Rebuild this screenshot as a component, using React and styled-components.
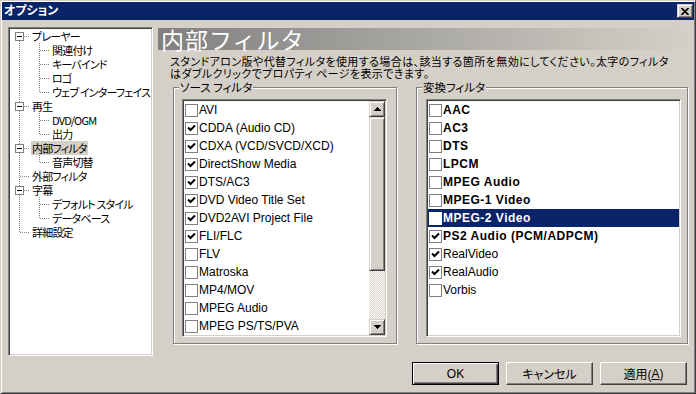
import React from "react";
import styled, { createGlobalStyle } from "styled-components";

const GlobalStyle = createGlobalStyle`
  html, body {
    margin: 0;
    padding: 0;
    background: #d4d0c8;
  }
  body {
    font-family: "Liberation Sans", "Noto Sans CJK JP", sans-serif;
    font-size: 12px;
    font-feature-settings: "palt";
    color: #000;
  }
  * {
    box-sizing: border-box;
  }
`;

const raised = `
  background: #d4d0c8;
  border: 1px solid;
  border-color: #d4d0c8 #404040 #404040 #d4d0c8;
  box-shadow: inset 1px 1px #fff, inset -1px -1px #808080;
`;

const sunken = `
  background: #fff;
  border: 1px solid;
  border-color: #808080 #fff #fff #808080;
  box-shadow: inset 1px 1px #404040, inset -1px -1px #d4d0c8;
`;

const Window = styled.div`
  width: 696px;
  height: 394px;
  background: #d4d0c8;
  border: 1px solid;
  border-color: #d4d0c8 #404040 #404040 #d4d0c8;
  box-shadow: inset 1px 1px #fff, inset -1px -1px #808080;
  padding: 1px;
  display: flex;
  flex-direction: column;
`;

const TitleBar = styled.div`
  height: 18px;
  background: #0a246a;
  display: flex;
  align-items: center;
  justify-content: space-between;
  padding: 0 1px 0 2px;
`;

const Title = styled.span`
  color: #fff;
  font-weight: bold;
  font-size: 12px;
  line-height: 18px;
`;

const CloseBtn = styled.div`
  ${raised}
  width: 16px;
  height: 14px;
  display: flex;
  align-items: center;
  justify-content: center;
`;

const Body = styled.div`
  flex: 1;
  display: flex;
  flex-direction: column;
  padding: 7px 6px 6px 6px;
`;

const Main = styled.div`
  display: flex;
  align-items: flex-start;
  gap: 5px;
`;

const Tree = styled.div`
  ${sunken}
  width: 145px;
  height: 329px;
  padding: 1px 0 0 1px;
  overflow: hidden;
`;

const TreeRow = styled.div`
  display: flex;
  align-items: center;
  height: 14px;
`;

const TreeLabel = styled.span`
  font-family: "Noto Sans CJK JP", sans-serif;
  font-size: 11px;
  letter-spacing: -0.8px;
  line-height: 14px;
  padding: 0 1px;
  margin-left: 1px;
  white-space: nowrap;
  background: ${(p) => (p.$selected ? "#d4d0c8" : "transparent")};
`;

const Page = styled.div`
  flex: 1;
  display: flex;
  flex-direction: column;
  margin-top: 1px;
`;

const Header = styled.div`
  height: 22px;
  background: linear-gradient(90deg, #808080, #d4d0c8);
  color: #fff;
  font-family: "Noto Sans CJK JP", sans-serif;
  font-feature-settings: normal;
  font-size: 23px;
  letter-spacing: 1px;
  line-height: 22px;
  padding-left: 3px;
`;

const Desc = styled.div`
  margin: 5px 0 0 12px;
  font-family: "Noto Sans CJK JP", sans-serif;
  font-size: 11px;
  letter-spacing: 0.4px;
  line-height: 12px;
  white-space: nowrap;
`;

const Groups = styled.div`
  display: flex;
  gap: 19px;
  margin-top: 2px;
  padding-left: 15px;
`;

const Group = styled.div`
  width: ${(p) => (p.$wide ? "auto" : "224px")};
  flex: ${(p) => (p.$wide ? 1 : "none")};
  margin-top: 6px;
  border: 1px solid #808080;
  box-shadow: inset 1px 1px #fff, 1px 1px #fff;
  padding: ${(p) => (p.$wide ? "0 6px 6px 9px" : "0 9px 6px 8px")};
`;

const Legend = styled.div`
  width: fit-content;
  margin: -7px 0 0 ${(p) => (p.$wide ? "-4px" : "-3px")};
  padding: 0 1px;
  line-height: 12px;
  height: 12px;
  background: #d4d0c8;
  font-family: "Noto Sans CJK JP", sans-serif;
  font-size: 11.5px;
`;

const ListBox = styled.div`
  ${sunken}
  margin-top: 6px;
  height: 238px;
  padding: 1px;
  display: flex;
`;

const Items = styled.div`
  flex: 1;
  overflow: hidden;
`;

const Item = styled.div`
  height: 18px;
  display: flex;
  align-items: center;
  gap: 1px;
  padding-left: 1px;
  white-space: nowrap;
  font-weight: ${(p) => (p.$bold ? "bold" : "normal")};
  letter-spacing: ${(p) => (p.$bold ? "0.5px" : "normal")};
  background: ${(p) => (p.$selected ? "#0a246a" : "transparent")};
  color: ${(p) => (p.$selected ? "#fff" : "#000")};
`;

const Box = styled.span`
  width: 13px;
  height: 13px;
  flex: none;
  background: #fff;
  border: 1px solid ${(p) => (p.$selected ? "#fff" : "#808080")};
  display: flex;
  align-items: center;
  justify-content: center;
`;

const ScrollBar = styled.div`
  width: 16px;
  display: flex;
  flex-direction: column;
  background: repeating-conic-gradient(#d4d0c8 0 25%, #fff 0 50%) 0 0 / 2px 2px;
`;

const ScrollBtn = styled.div`
  ${raised}
  height: 16px;
  display: flex;
  align-items: center;
  justify-content: center;
`;

const Thumb = styled.div`
  ${raised}
  height: 154px;
`;

const Track = styled.div`
  flex: 1;
`;

const Buttons = styled.div`
  display: flex;
  justify-content: flex-end;
  gap: 7px;
  margin-top: 6px;
  padding-right: 1px;
`;

const Button = styled.div`
  width: 87px;
  height: 23px;
  background: #d4d0c8;
  display: flex;
  align-items: center;
  justify-content: center;
  font-family: "Liberation Sans", "Noto Sans CJK JP", sans-serif;
  border: 1px solid;
  border-color: ${(p) =>
    p.$default ? "#000" : "#fff #404040 #404040 #fff"};
  box-shadow: ${(p) =>
    p.$default
      ? "inset 1px 1px #fff, inset -1px -1px #404040, inset -2px -2px #808080"
      : "inset -1px -1px #808080"};
`;

const treeItems = [
  { label: "プレーヤー", level: 1, box: true, first: true },
  { label: "関連付け", level: 2 },
  { label: "キーバインド", level: 2 },
  { label: "ロゴ", level: 2 },
  { label: "ウェブ インターフェイス", level: 2, lastChild: true },
  { label: "再生", level: 1, box: true },
  { label: "DVD/OGM", level: 2 },
  { label: "出力", level: 2, lastChild: true },
  { label: "内部フィルタ", level: 1, box: true, selected: true },
  { label: "音声切替", level: 2, lastChild: true },
  { label: "外部フィルタ", level: 1 },
  { label: "字幕", level: 1, box: true },
  { label: "デフォルト スタイル", level: 2 },
  { label: "データベース", level: 2, lastChild: true },
  { label: "詳細設定", level: 1, last: true },
];

const sourceFilters = [
  ["AVI", false],
  ["CDDA (Audio CD)", true],
  ["CDXA (VCD/SVCD/XCD)", true],
  ["DirectShow Media", true],
  ["DTS/AC3", true],
  ["DVD Video Title Set", true],
  ["DVD2AVI Project File", true],
  ["FLI/FLC", true],
  ["FLV", false],
  ["Matroska", false],
  ["MP4/MOV", false],
  ["MPEG Audio", false],
  ["MPEG PS/TS/PVA", false],
];

const transformFilters = [
  { label: "AAC", bold: true },
  { label: "AC3", bold: true },
  { label: "DTS", bold: true },
  { label: "LPCM", bold: true },
  { label: "MPEG Audio", bold: true },
  { label: "MPEG-1 Video", bold: true },
  { label: "MPEG-2 Video", bold: true, selected: true },
  { label: "PS2 Audio (PCM/ADPCM)", bold: true, checked: true },
  { label: "RealVideo", checked: true },
  { label: "RealAudio", checked: true },
  { label: "Vorbis" },
];

const dots = { stroke: "#808080", strokeWidth: 1, strokeDasharray: "1 1" };

const Connector = ({ top, bottom, box }) => (
  <svg width="20" height="14" viewBox="0 0 20 14" style={{ flex: "none" }}>
    {top && <line x1="9.5" y1="0" x2="9.5" y2={box ? 3 : 7} {...dots} />}
    {bottom && <line x1="9.5" y1={box ? 12 : 8} x2="9.5" y2="14" {...dots} />}
    <line x1={box ? 14 : 10} y1="7.5" x2="19" y2="7.5" {...dots} />
    {box && (
      <>
        <rect x="5.5" y="3.5" width="8" height="8" fill="#fff" stroke="#808080" />
        <line x1="7" y1="7.5" x2="12" y2="7.5" stroke="#000" />
      </>
    )}
  </svg>
);

const Pass = () => (
  <svg width="20" height="14" viewBox="0 0 20 14" style={{ flex: "none" }}>
    <line x1="9.5" y1="0" x2="9.5" y2="14" {...dots} />
  </svg>
);

const Check = ({ on, selected }) => (
  <Box $selected={selected}>
    {on && (
      <svg width="9" height="9" viewBox="0 0 9 9">
        <path d="M1 3.5 L3.5 6 L8 1.5" stroke="#000" strokeWidth="2" fill="none" />
      </svg>
    )}
  </Box>
);

const Arrow = ({ down }) => (
  <svg
    width="7"
    height="4"
    viewBox="0 0 7 4"
    style={down ? { transform: "rotate(180deg)" } : undefined}
  >
    <path d="M3 0h1v1h1v1h1v1h1v1H0V3h1V2h1V1h1z" fill="#000" />
  </svg>
);

const App = () => (
  <>
    <GlobalStyle />
    <Window>
      <TitleBar>
        <Title>オプション</Title>
        <CloseBtn>
          <svg width="8" height="7" viewBox="0 0 8 7">
            <path d="M0.5 0 L7.5 7 M7.5 0 L0.5 7" stroke="#000" strokeWidth="1.6" />
          </svg>
        </CloseBtn>
      </TitleBar>
      <Body>
        <Main>
          <Tree>
            {treeItems.map((t) => (
              <TreeRow key={t.label}>
                {t.level === 1 ? (
                  <Connector top={!t.first} bottom={!t.last} box={t.box} />
                ) : (
                  <>
                    <Pass />
                    <Connector top bottom={!t.lastChild} />
                  </>
                )}
                <TreeLabel $selected={t.selected}>{t.label}</TreeLabel>
              </TreeRow>
            ))}
          </Tree>
          <Page>
            <Header>内部フィルタ</Header>
            <Desc>
              スタンドアロン版や代替フィルタを使用する場合は、該当する箇所を無効にしてください。太字のフィルタ
              <br />
              はダブルクリックでプロパティ ページを表示できます。
            </Desc>
            <Groups>
              <Group>
                <Legend>ソース フィルタ</Legend>
                <ListBox>
                  <Items>
                    {sourceFilters.map(([label, on]) => (
                      <Item key={label}>
                        <Check on={on} />
                        {label}
                      </Item>
                    ))}
                  </Items>
                  <ScrollBar>
                    <ScrollBtn>
                      <Arrow />
                    </ScrollBtn>
                    <Thumb />
                    <Track />
                    <ScrollBtn>
                      <Arrow down />
                    </ScrollBtn>
                  </ScrollBar>
                </ListBox>
              </Group>
              <Group $wide>
                <Legend $wide>変換フィルタ</Legend>
                <ListBox>
                  <Items>
                    {transformFilters.map((f) => (
                      <Item key={f.label} $bold={f.bold} $selected={f.selected}>
                        <Check on={f.checked} selected={f.selected} />
                        {f.label}
                      </Item>
                    ))}
                  </Items>
                </ListBox>
              </Group>
            </Groups>
          </Page>
        </Main>
        <Buttons>
          <Button $default>OK</Button>
          <Button>キャンセル</Button>
          <Button>
            適用(<u>A</u>)
          </Button>
        </Buttons>
      </Body>
    </Window>
  </>
);

export default App;
